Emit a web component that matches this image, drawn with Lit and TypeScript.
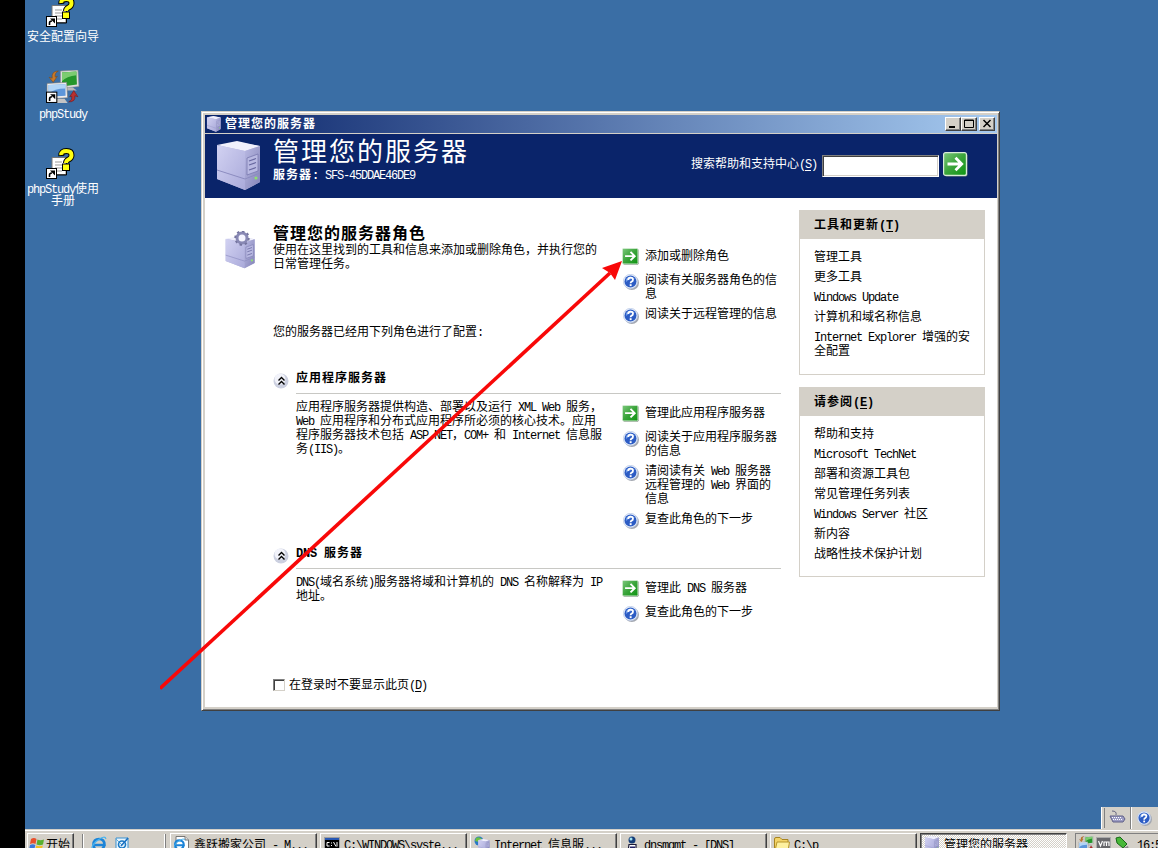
import { LitElement, html, svg, css, TemplateResult } from "lit";
import { customElement, property } from "lit/decorators.js";

// Splits mixed text so that half-width characters take exactly half an em; "&" underlines the next letter.
const mix = (s: string): TemplateResult[] =>
  (s.match(/[\x20-\x7e]+|[^\x20-\x7e]+/g) || []).map((run) => {
    if (!/^[\x20-\x7e]/.test(run)) return html`${run}`;
    const i = run.indexOf("&");
    return i < 0
      ? html`<span class="l">${run}</span>`
      : html`<span class="l">${run.slice(0, i)}<u>${run[i + 1]}</u>${run.slice(i + 2)}</span>`;
  });
const lines = (a: string[]) => a.map((t) => html`<div class="line">${mix(t)}</div>`);

const text = css`
  .l { font-family: "Liberation Mono", monospace; font-size: 12px; letter-spacing: -1.2px; line-height: 0; white-space: pre; }
  .b { font-weight: 700; letter-spacing: 1px; }
  .b .l { letter-spacing: -0.2px; }
  .line { white-space: nowrap; height: 14px; line-height: 12px; }
  u { text-underline-offset: 2px; }
  svg { display: block; flex: none; }
`;

const server = svg`
  <path d="M1 5 L21 1 L44 5 L44 41 L29 49 L1 38Z" fill="#b4b4dc"/>
  <path d="M1 4 L21 0 L44 5 L29 10Z" fill="#f0f0fc"/>
  <path d="M1 4 L29 10 V49 L1 38Z" fill="url(#sf)"/>
  <path d="M29 10 L44 5 V41 L29 49Z" fill="url(#ss)"/>
  <path d="M1 29 L29 38 L44 32" fill="none" stroke="#8c8cc0" stroke-width="1"/>
  <path d="M31 17 L42 13 V30 L31 34Z" fill="#b9b9e2" stroke="#7878ae" stroke-width=".8"/>
  <path d="M33 20 L40 17.5 M33 24 L40 21.5 M33 29 L40 26.500" stroke="#6868a0" stroke-width="1.2"/>
  <circle cx="40" cy="37" r="1.6" fill="#8ee070"/>
  <defs>
    <linearGradient id="sf" x1="0" y1="0" x2="1" y2="1"><stop offset="0" stop-color="#d2d2f2"/><stop offset="1" stop-color="#aaaada"/></linearGradient>
    <linearGradient id="ss" x1="0" y1="0" x2="1" y2="1"><stop offset="0" stop-color="#b8b8e2"/><stop offset="1" stop-color="#8484b8"/></linearGradient>
  </defs>`;

const question = (n: number) => html`<svg width=${n} height=${n} viewBox="0 0 16 16">
  <circle cx="8.800" cy="8.800" r="7.200" fill="#a4a8b0"/>
  <circle cx="7.500" cy="7.500" r="7.200" fill="#e6eefa" stroke="#b4c4e4" stroke-width=".6"/>
  <circle cx="7.500" cy="7.500" r="6" fill="#2c5cc4"/>
  <path d="M3 5 Q7 0 12 5 Q7 4 3 8Z" fill="#6c98e6"/>
  <path d="M5.200 6 Q5.200 3.600 7.600 3.600 Q10 3.600 10 5.700 Q10 7 8.600 7.600 Q7.600 8 7.600 9.300" fill="none" stroke="#fff" stroke-width="1.800"/>
  <rect x="6.700" y="10.200" width="1.900" height="1.900" fill="#fff"/></svg>`;

const go = (n: number) => html`<svg width=${n} height=${n} viewBox="0 0 25 25">
  <defs><linearGradient id="gg" x1="0" y1="0" x2="1" y2="1"><stop offset="0" stop-color="#7cc87c"/><stop offset=".5" stop-color="#3aa43a"/><stop offset="1" stop-color="#0c9410"/></linearGradient></defs>
  <rect x="1.500" y="1.500" width="23" height="23" rx="2" fill="#7c907c"/>
  <rect x=".6" y=".6" width="22.800" height="22.800" rx="2" fill="url(#gg)" stroke="#d8ecd8" stroke-width="1.200"/>
  <path d="M4.500 12 H18 M12.500 5.800 L18.700 12 L12.500 18.200" fill="none" stroke="#fff" stroke-width="2.800"/></svg>`;

const shortcut = svg`<rect x=".5" y="21.500" width="10" height="10" fill="#fff" stroke="#000"/>
  <path d="M3.500 30 V28 Q3.500 26 6 26" fill="none" stroke="#000" stroke-width="1.600"/><path d="M4 23.500 H9 V28.500Z" fill="#000"/>`;

const helpDoc = html`<svg width="34" height="32" viewBox="0 0 34 32">
  <path d="M6 10.500 H20 V27.500 H6Z" fill="#fff" stroke="#777"/><path d="M7 28 H20.500 V13" fill="none" stroke="#000"/>
  <path d="M9 15 H16 M9 18 H16 M9 21 H16 M11 24 H16" stroke="#999"/>
  <path d="M15.300 9 Q15 4 20.500 4 Q25.500 4 25.500 8.200 Q25.500 11 22.500 12.500 Q20 13.800 20 16" fill="none" stroke="#000" stroke-width="6"/>
  <rect x="16.500" y="17" width="7" height="6.500" fill="#ffff10" stroke="#000"/>
  <path d="M15.300 8 Q15 4 20.500 4 Q25.500 4 25.500 8.200 Q25.500 11 22.500 12.500 Q20 13.800 20 16" fill="none" stroke="#ffff10" stroke-width="4"/>
  ${shortcut}</svg>`;

const monitors = svg`
  <path d="M14 1 L31 0 L32 16 L14 18Z" fill="#dcdcdc" stroke="#888" stroke-width=".6"/><path d="M15.500 2.500 L29.500 1.500 L30 14 L15.500 16Z" fill="#24962a"/>
  <path d="M15.500 2.500 L29.500 1.500 V5 Q20 6 15.500 11Z" fill="#7ccc70"/>
  <path d="M20 17 H26 L30 20 H18Z" fill="#b8b8b8"/>
  <path d="M1 13 L20 12 L21 27 L1 28Z" fill="#eee" stroke="#777" stroke-width=".6"/><path d="M2.500 14.500 L18.800 13.800 L19 25 L2.500 26Z" fill="#5c96da"/>
  <path d="M2.500 14.500 L18.800 13.800 V18 Q8 18 2.500 23Z" fill="#b0d4f6"/>
  <path d="M11 28 H18 L21 32 H9Z" fill="#c4c4c4"/>
  <path d="M12 1 Q5 1 6 8 L3 7 L7 12 L11 6 L9 7 Q8 3 12 1Z" fill="#c87828" stroke="#7c4410" stroke-width=".5"/>
  <path d="M22 31 Q29 31 28 25 L31 26 L27 20 L23 26 L25 25.500 Q26 29 22 31Z" fill="#b83030" stroke="#701010" stroke-width=".5"/>`;

const ie = svg`<path d="M13 10 Q12 14 8 14 Q2.500 14 2.500 8.500 Q2.500 3 8 3 Q13.500 3 13.500 9 H4" fill="none" stroke="#1c84d8" stroke-width="2.600"/>
  <path d="M1 14 Q0 9 7 4 Q14 -1 15 3" fill="none" stroke="#48b4f0" stroke-width="1.200"/>`;

@customElement("desk-icon")
class DeskIcon extends LitElement {
  @property({ attribute: false }) icon?: TemplateResult;
  @property({ attribute: false }) label: string[] = [];
  static styles = [text, css`
    :host { display: flex; flex-direction: column; align-items: center; width: 76px; color: #fff; gap: 3px; }
    .line { height: 12px; line-height: 12px; text-align: center; }
  `];
  render() { return html`${this.icon}<div>${lines(this.label)}</div>`; }
}

@customElement("task-links")
class TaskLinks extends LitElement {
  @property({ attribute: false }) items: string[][] = [];
  static styles = [text, css`
    :host { display: flex; flex-direction: column; gap: 6px; }
    .row { display: flex; gap: 6px; align-items: flex-start; }
    .first { margin-bottom: 4px; height: 14px; }
    .ic { width: 17px; flex: none; padding-top: 1px; }
    .first .ic { padding-top: 0; margin-top: -1px; }
    .row:not(.first) .ic { height: 10px; padding-left: 1px; width: 16px; }
  `];
  render() {
    return this.items.map((t, i) => html`<div class="row ${i ? "" : "first"}">
      <div class="ic">${i ? question(16) : go(17)}</div><div>${lines(t)}</div></div>`);
  }
}

@customElement("server-role")
class ServerRole extends LitElement {
  @property() name = "";
  @property({ attribute: false }) body: string[] = [];
  @property({ attribute: false }) items: string[][] = [];
  static styles = [text, css`
    :host { display: block; height: 175px; }
    .head { display: flex; gap: 7px; }
    .chev { padding-top: 2px; width: 16px; }
    .title { flex: 1; height: 22px; border-bottom: 1px solid #c8c8c4; }
    .cols { display: grid; grid-template-columns: 326px 1fr; padding: 6px 0 0 23px; }
    task-links { padding-top: 6px; }
  `];
  render() {
    return html`<div class="head"><div class="chev"><svg width="16" height="16" viewBox="0 0 16 16">
      <circle cx="8" cy="8" r="7.500" fill="#ccd0e0"/><circle cx="7" cy="6" r="5.500" fill="#f2f3fa"/>
      <path d="M5.500 7.500 L8.500 4.500 L11.500 7.500 M5.500 11.500 L8.500 8.500 L11.500 11.500" fill="none" stroke="#000" stroke-width="1.400"/></svg></div>
      <div class="title b">${lines([this.name])}</div></div>
      <div class="cols"><div>${lines(this.body)}</div><task-links .items=${this.items}></task-links></div>`;
  }
}

@customElement("side-box")
class SideBox extends LitElement {
  @property() name = "";
  @property({ attribute: false }) items: string[][] = [];
  static styles = [text, css`
    :host { display: block; box-sizing: border-box; border: 1px solid #d4d0c8; }
    .head { background: #d4d0c8; height: 28px; padding: 7px 0 0 14px; box-sizing: border-box; }
    .list { padding: 11px 0 17px 14px; display: flex; flex-direction: column; gap: 6px; }
  `];
  render() {
    return html`<div class="head b">${lines([this.name])}</div>
      <div class="list">${this.items.map((t) => html`<div>${lines(t)}</div>`)}</div>`;
  }
}

@customElement("server-window")
class ServerWindow extends LitElement {
  static styles = [text, css`
    :host { display: flex; flex-direction: column; box-sizing: border-box; width: 799px; height: 600px; background: #d4d0c8; color: #000;
      border: 1px solid; border-color: #d4d0c8 #404040 #404040 #d4d0c8;
      box-shadow: inset 1px 1px #fff, inset -1px -1px #808080; padding: 3px 2px 3px 3px; }
    .bar { display: flex; height: 18px; background: linear-gradient(90deg, #0a246a, #a6caf0); color: #fff; align-items: center; padding-left: 1px; gap: 3px; margin-bottom: 1px; }
    .bar .t { flex: 1; }
    .btns { display: flex; padding-right: 2px; }
    .btn { width: 16px; height: 14px; box-sizing: border-box; background: #d4d0c8; border: 1px solid; border-color: #fff #404040 #404040 #fff; box-shadow: inset -1px -1px #808080; }
    .btn:last-child { margin-left: 2px; }
    .head { background: #0a246a; height: 64px; color: #fff; display: flex; }
    .logo { width: 68px; padding: 7px 0 0 11px; box-sizing: border-box; }
    .names { flex: 1; }
    h1 { font-size: 26px; letter-spacing: 2px; font-weight: 400; margin: 1px 0 3px; line-height: 30px; height: 30px; }
    .search { display: flex; padding-right: 29px; }
    .search .line { padding: 23px 5px 0 0; }
    .field { margin: 21px 4px 0 0; width: 117px; height: 22px; box-sizing: border-box; background: #fff; border: 1px solid; border-color: #808080 #fff #fff #808080; box-shadow: inset 1px 1px #404040, inset -1px -1px #d4d0c8; }
    .go { padding-top: 18px; }
    .page { flex: 1; background: #fff; display: grid; grid-template-columns: 576px 186px; gap: 18px; }
    .intro { display: grid; grid-template-columns: 68px 349px 1fr; height: 127px; padding-top: 26px; box-sizing: border-box; }
    .gear { padding: 7px 0 0 20px; }
    h2 { font-size: 16px; letter-spacing: 1px; line-height: 16px; height: 19px; margin: 0; white-space: nowrap; }
    .intro task-links { padding-top: 25px; }
    .conf { padding-left: 68px; height: 46px; }
    server-role { margin-left: 68px; }
    .roles { height: 350px; }
    .check { display: flex; gap: 4px; padding: 7px 0 0 68px; margin-top: -50px; }
    .box { width: 12px; height: 12px; margin-top: 1px; box-sizing: border-box; border: 1px solid; border-color: #808080 #d4d0c8 #d4d0c8 #808080; box-shadow: inset 1px 1px #404040; }
    aside { display: flex; flex-direction: column; gap: 12px; padding-top: 12px; }
    .first { height: 165px; } .second { height: 190px; }
  `];
  render() {
    return html`
      <div class="bar"><svg width="16" height="16" viewBox="0 0 46 50">${server}</svg><div class="t b line">${mix("管理您的服务器")}</div>
        <div class="btns">
          <div class="btn"><svg width="14" height="12"><rect x="3" y="8" width="6" height="2"/></svg></div>
          <div class="btn"><svg width="14" height="12"><path d="M2.500 2 H11.500 V9.500 H2.500Z M2 2.500 H12" fill="none" stroke="#000"/></svg></div>
          <div class="btn"><svg width="14" height="12"><path d="M3.500 2 L10.500 9 M10.500 2 L3.500 9" stroke="#000" stroke-width="1.500"/></svg></div>
        </div></div>
      <div class="head">
        <div class="logo"><svg width="46" height="50">${server}</svg></div>
        <div class="names"><h1>管理您的服务器</h1><div class="line"><span class="b">${mix("服务器:")}</span>${mix(" SFS-45DDAE46DE9")}</div></div>
        <div class="search"><div class="line">${mix("搜索帮助和支持中心(&S)")}</div><div class="field"></div><div class="go">${go(25)}</div></div>
      </div>
      <div class="page">
        <div>
          <div class="intro">
            <div class="gear"><svg width="32" height="38" viewBox="0 0 32 38">
              <svg y="5" width="31" height="33" viewBox="0 0 46 50" preserveAspectRatio="none">${server}</svg>
              <circle cx="17" cy="7" r="5" fill="#f4f4ff" stroke="#8888b4" stroke-width="3"/>
              <circle cx="17" cy="7" r="6.800" fill="none" stroke="#74749e" stroke-width="1.800" stroke-dasharray="2.500 2.800"/></svg></div>
            <div><h2>管理您的服务器角色</h2>${lines(["使用在这里找到的工具和信息来添加或删除角色，并执行您的", "日常管理任务。"])}</div>
            <task-links .items=${[["添加或删除角色"], ["阅读有关服务器角色的信", "息"], ["阅读关于远程管理的信息"]]}></task-links>
          </div>
          <div class="conf">${lines(["您的服务器已经用下列角色进行了配置:"])}</div>
          <div class="roles">
            <server-role name="应用程序服务器"
              .body=${["应用程序服务器提供构造、部署以及运行 XML Web 服务，", "Web 应用程序和分布式应用程序所必须的核心技术。应用", "程序服务器技术包括 ASP.NET，COM+ 和 Internet 信息服", "务(IIS)。"]}
              .items=${[["管理此应用程序服务器"], ["阅读关于应用程序服务器", "的信息"], ["请阅读有关 Web 服务器", "远程管理的 Web 界面的", "信息"], ["复查此角色的下一步"]]}></server-role>
            <server-role name="DNS 服务器"
              .body=${["DNS(域名系统)服务器将域和计算机的 DNS 名称解释为 IP", "地址。"]}
              .items=${[["管理此 DNS 服务器"], ["复查此角色的下一步"]]}></server-role>
          </div>
          <div class="check"><div class="box"></div>${lines(["在登录时不要显示此页(&D)"])}</div>
        </div>
        <aside>
          <side-box class="first" name="工具和更新(&T)" .items=${[["管理工具"], ["更多工具"], ["Windows Update"], ["计算机和域名称信息"], ["Internet Explorer 增强的安", "全配置"]]}></side-box>
          <side-box class="second" name="请参阅(&E)" .items=${[["帮助和支持"], ["Microsoft TechNet"], ["部署和资源工具包"], ["常见管理任务列表"], ["Windows Server 社区"], ["新内容"], ["战略性技术保护计划"]]}></side-box>
        </aside>
      </div>`;
  }
}

const i16 = (g: unknown, box = "0 0 16 16") => html`<svg width="16" height="16" viewBox=${box}>${g}</svg>`;
const flag = svg`<path d="M2 3 Q5 1 7.500 3 L6.500 8 Q4 6.500 1 8Z" fill="#e8502c"/><path d="M8.500 3.500 Q11 5 15 3.500 L14 8.500 Q11 10 7.500 8.500Z" fill="#58b030"/>
  <path d="M1 9 Q4 7.500 6.300 9 L5.200 14 Q3 12.500 0 14Z" fill="#3c78dc"/><path d="M7.300 9.500 Q10 11 13.800 9.500 L12.600 14.500 Q10 16 6.200 14.500Z" fill="#f4c020"/>`;
const oe = svg`<path d="M2 2 H14 V14 H2Z" fill="#e8f4fc" stroke="#3890d0"/><path d="M2 3 L8 9 L14 3" fill="none" stroke="#5cacdc"/>
  <circle cx="8" cy="8.500" r="3.500" fill="none" stroke="#1878c4" stroke-width="1.600"/><path d="M7 10 L14 2" stroke="#1c70c0" stroke-width="1.500"/>`;
const page = svg`<path d="M2 .5 H11 L14.500 4 V15.500 H2Z" fill="#fff" stroke="#777"/><path d="M11 .5 V4 H14.500" fill="#ddd" stroke="#777"/><g transform="translate(-1 2) scale(.8)">${ie}</g>`;
const cmd = svg`<rect x=".5" y="1.500" width="15" height="12" fill="#000" stroke="#a0a0a0"/><rect x="1" y="2" width="14" height="2" fill="#2858b4"/>
  <path d="M5.500 6.500 H3 V10 H5.500 M7.500 6.500 V7.500 M7.500 9 V10 M9.500 6 L12 10.500 M13 6 V10.500" stroke="#fff" fill="none"/>`;
const iis = svg`<circle cx="5" cy="5" r="4.500" fill="#2878c8"/><path d="M2 2 Q5 0 8 3 L5 6 L1 5Z" fill="#6cc040"/><svg x="4" y="3" width="12" height="13" viewBox="0 0 46 50" preserveAspectRatio="none">${server}</svg>`;
const dns = svg`<circle cx="8" cy="4" r="3.500" fill="#143c78"/><circle cx="7" cy="3" r="1.500" fill="#a0e0f0"/><path d="M5 8.500 H12 V16 H4Z" fill="#fff" stroke="#181838" stroke-width="1.200"/><path d="M6 11.500 H11" stroke="#222266" stroke-width="2"/>`;
const folder = svg`<path d="M.5 3 Q.5 1.500 2 1.500 H6 L8 3.500 H14 V15 H.5Z" fill="#f4d468" stroke="#a88420"/><path d="M3 6 H15.500 L14 15 H1Z" fill="#fdf0a0" stroke="#b8962c"/>`;

@customElement("task-bar")
class TaskBar extends LitElement {
  static styles = [text, css`
    :host { display: flex; box-sizing: border-box; height: 19px; background: #d4d0c8; box-shadow: inset 0 1px #d4d0c8, inset 0 2px #fff; padding: 4px 0 0 2px; overflow: hidden; color: #000; }
    .btn { height: 22px; box-sizing: border-box; border: 1px solid; border-color: #fff #404040 #404040 #fff; box-shadow: inset -1px -1px #808080; display: flex; padding: 2px 0 0 3px; gap: 4px; flex: none; }
    .line { padding-top: 2px; }
    .start { width: 47px; gap: 1px; padding-left: 1px; }
    .sep { width: 2px; height: 20px; border-left: 1px solid #808080; background: #fff; box-sizing: border-box; margin: 1px 7px 0 8px; }
    .quick { display: flex; gap: 7px; width: 66px; padding-top: 3px; flex: none; }
    .grip { width: 2px; height: 20px; margin: 1px 4px 0 7px; border-left: 1px solid #fff; background: #808080; box-sizing: border-box; }
    .start, .sep, .grip { flex: none; }
    .tasks { display: flex; gap: 3px; flex: none; }
    .tasks .btn { width: 147px; }
    .tasks .on { border-color: #404040 #fff #fff #404040; box-shadow: inset 1px 1px #808080; background: repeating-conic-gradient(#fff 0 25%, #d4d0c8 0 50%) 0 0 / 2px 2px; }
    .tray { margin-left: 8px; flex: 1 0 0; width: 0; height: 22px; border-top: 1px solid #808080; border-left: 1px solid #808080; display: flex; gap: 2px; padding: 2px 0 0 2px; }
    .clock { padding: 0 0 0 5px; }
  `];
  render() {
    const t: [unknown, string, string][] = [[page, "鑫跃搬家公司 - M...", ""], [cmd, "C:\\WINDOWS\\syste...", ""], [iis, "Internet 信息服...", ""], [dns, "dnsmgmt - [DNS]", ""], [folder, "C:\\p", ""], [svg`<svg width="16" height="16" viewBox="0 0 46 50">${server}</svg>`, "管理您的服务器", "on"]];
    return html`<div class="btn start">${i16(flag)}${lines(["开始"])}</div><div class="sep"></div>
      <div class="quick">${i16(ie)}${i16(oe)}</div><div class="grip"></div>
      <div class="tasks">${t.map(([g, s, c]) => html`<div class="btn ${c}">${i16(g)}${lines([s])}</div>`)}</div>
      <div class="tray">${i16(monitors, "0 0 33 33")}
        <svg width="16" height="16"><rect x=".5" y="1.500" width="14" height="13" fill="#68686c" stroke="#aaa"/><path d="M2.500 5 L4.500 10 L6.500 5 M8 10 V6 H10.500 V10 M10.500 6 H13 V10" stroke="#fff" fill="none" stroke-width="1.200"/></svg>
        <svg width="16" height="16"><path d="M2 2 L6 1 L13 8 L9 12 L3 7Z" fill="#48b838" stroke="#186818"/><path d="M9 12 L14 10 L15 14 L11 15Z" fill="#888"/></svg>
        <div class="clock">${lines(["16:55"])}</div></div>`;
  }
}

@customElement("app-root")
class AppRoot extends LitElement {
  static styles = [text, css`
    :host { display: flex; flex-direction: column; position: relative; width: 1158px; height: 848px; overflow: hidden; box-sizing: border-box;
      background: #3a6ea5; border-left: 25px solid #000; font: 12px/14px "Noto Sans CJK SC", sans-serif; text-spacing-trim: space-all; font-kerning: none; }
    .desk { flex: 1; }
    desk-icon { position: absolute; left: 0; }
    .i1 { top: -5px; } .i2 { top: 70px; } .i3 { top: 147px; }
    server-window { position: absolute; left: 176px; top: 111px; }
    .lang { position: absolute; right: 0; top: 807px; width: 57px; box-sizing: border-box; height: 22px; border-left: 1px solid #fff; background: #d4d0c8; display: flex; align-items: center; }
    .g { width: 1px; height: 20px; background: #808080; margin: 0 4px 0 2px; }
    .s { width: 1px; height: 22px; background: #808080; border-right: 1px solid #fff; margin: 0 5px 0 4px; }
    .arrow { position: absolute; left: 135px; top: 250px; }
  `];
  render() {
    return html`<div class="desk"></div><task-bar></task-bar>
      <desk-icon class="i1" .icon=${helpDoc} .label=${["安全配置向导"]}></desk-icon>
      <desk-icon class="i2" .icon=${html`<svg width="34" height="34" viewBox="0 0 33 33">${monitors}${shortcut}</svg>`} .label=${["phpStudy"]}></desk-icon>
      <desk-icon class="i3" .icon=${helpDoc} .label=${["phpStudy使用", "手册"]}></desk-icon>
      <server-window></server-window>
      <div class="lang"><div class="g"></div>
        <svg width="17" height="16"><path d="M3 1 Q8 1 7 5" fill="none" stroke="#666680"/><path d="M1 6 H14 L16 9 L14 12 H4Z" fill="#9c9cc4" stroke="#606088"/><path d="M3 7.500 H13 M4 9.500 H14" stroke="#fff" stroke-dasharray="1 1"/></svg>
        <div class="s"></div>${question(15)}</div>
      <svg class="arrow" width="480" height="450"><path d="M0 438.500 L450 23" stroke="#f80808" stroke-width="3.600" fill="none"/><path d="M462 11 L455 30 L450 23 L442 18Z" fill="#f80808"/></svg>`;
  }
}
